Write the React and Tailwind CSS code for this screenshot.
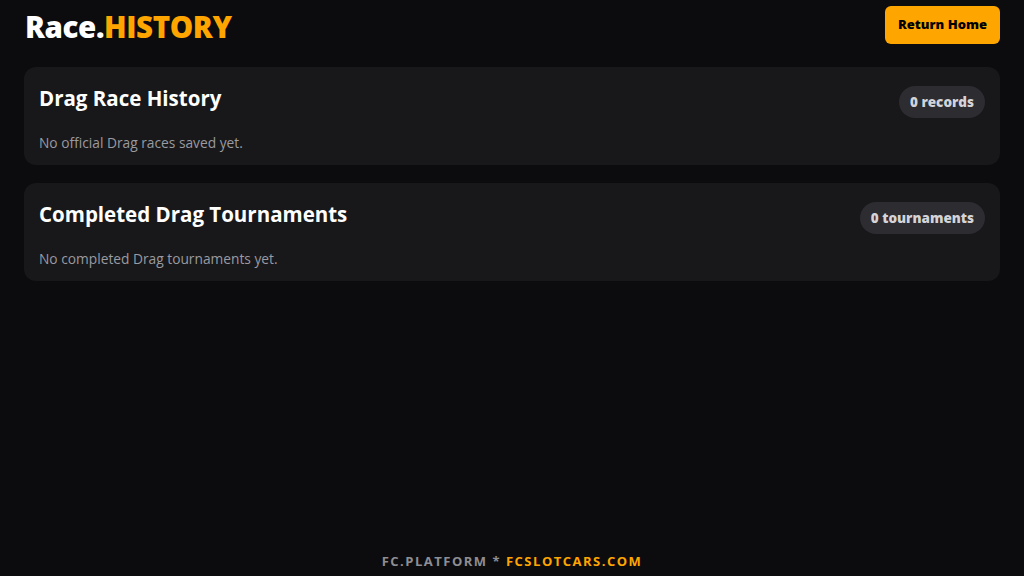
export default function App() {
  const sections = [
    { title: 'Drag Race History', badge: '0 records', empty: 'No official Drag races saved yet.' },
    { title: 'Completed Drag Tournaments', badge: '0 tournaments', empty: 'No completed Drag tournaments yet.' },
  ];

  return (
    <div className="min-h-screen bg-[#0c0c0e] text-white flex flex-col px-6 font-['Open_Sans',sans-serif]">
      {/* Header */}
      <header className="flex items-center justify-between pt-[6px]">
        <h1 className="mt-[3px] text-[29.5px] font-extrabold tracking-[-0.4px] leading-none pl-px">
          Race.<span className="text-[#ffa500]">HISTORY</span>
        </h1>
        <button className="h-[38px] px-[13px] rounded-md bg-[#ffa500] text-black text-[13px] font-extrabold">
          Return Home
        </button>
      </header>

      {/* Sections */}
      <main className="flex flex-col gap-[18px] mt-[23px]">
        {sections.map((s) => (
          <section key={s.title} className="bg-[#18181b] rounded-xl px-[15px] pt-[18px] pb-[12px]">
            <div className="flex items-start justify-between">
              <h2 className="text-[20.5px] font-bold leading-[26px]">{s.title}</h2>
              <span className="mt-px h-[32px] px-[11px] rounded-full bg-[#2c2c31] text-[#d4d4d8] text-[13.5px] font-extrabold flex items-center">
                {s.badge}
              </span>
            </div>
            <p className="mt-[15px] text-[13.75px] leading-5 text-[#9a9aa0]">{s.empty}</p>
          </section>
        ))}
      </main>

      {/* Footer */}
      <footer className="mt-auto pb-[5px] text-center text-[13px] font-bold tracking-[1.5px]">
        <span className="text-[#8e8e93]">FC.PLATFORM * </span>
        <span className="text-[#ffa500]">FCSLOTCARS.COM</span>
      </footer>
    </div>
  );
}
